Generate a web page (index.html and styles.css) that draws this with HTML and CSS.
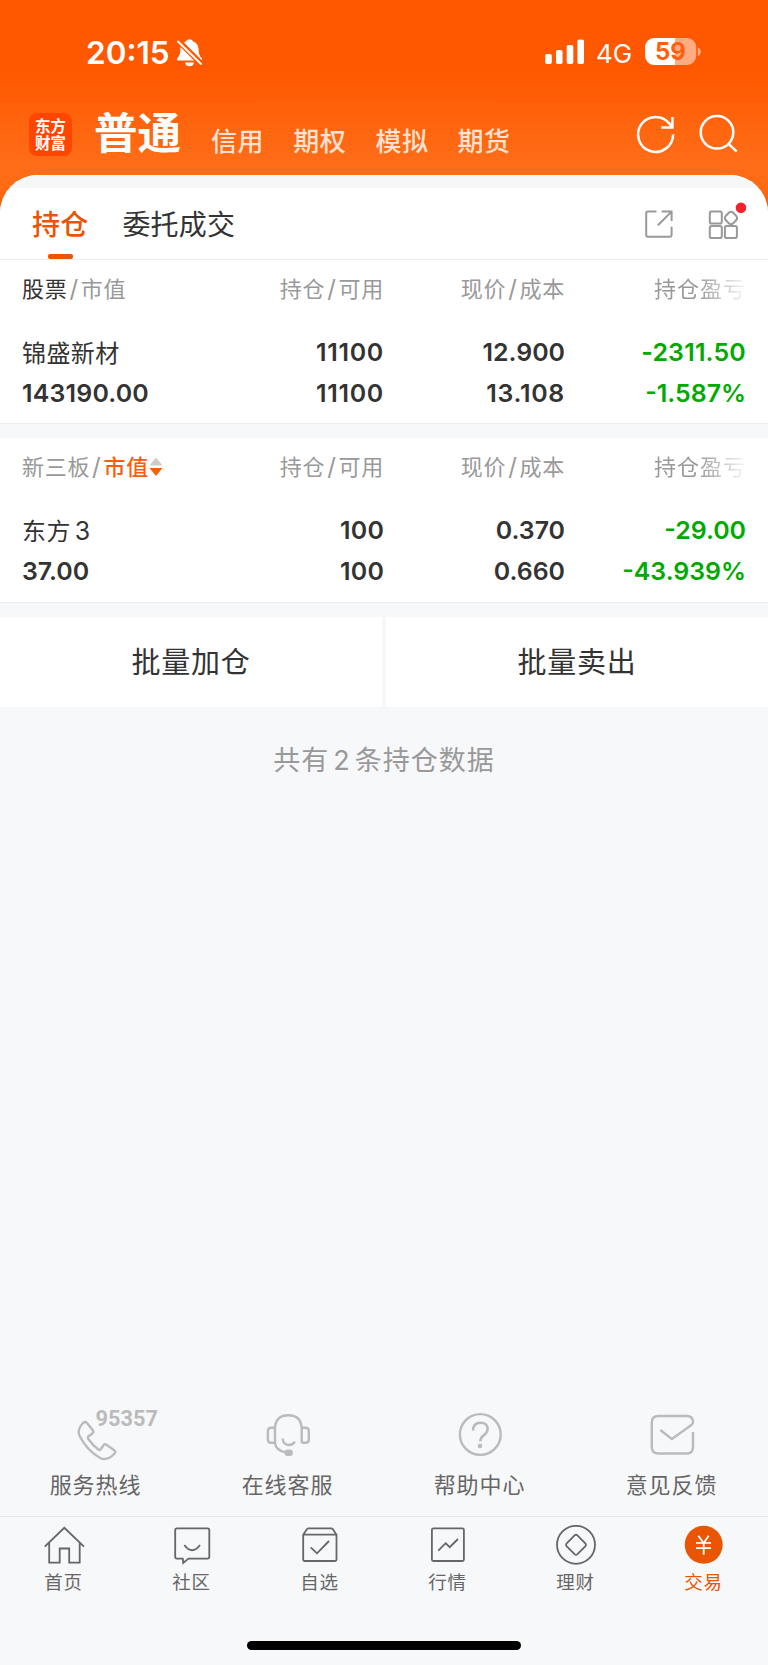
FILE: index.html
```html
<!DOCTYPE html>
<html lang="zh-CN">
<head>
<meta charset="utf-8">
<title>持仓</title>
<link rel="stylesheet" href="styles.css">
</head>
<body>
<div class="app">
  <header class="top">
    <div class="status">
      <span class="clock">20:15</span>
      <svg class="bell" width="27" height="30" viewBox="176 38 27 30">
        <path fill="#fff" d="M189.500 39.200c1.800 0 3.200 1 3.700 2.300 3.600 1.200 5.300 4.400 5.400 8 .1 4.500 1 6.300 3 8.500.8.900.5 2.600-1 2.600h-22.200c-1.500 0-1.800-1.700-1-2.600 2-2.200 2.900-4 3-8.500.1-3.600 1.800-6.800 5.400-8 .5-1.300 1.900-2.300 3.700-2.300zM185.200 62.600h8.600a4.300 3.600 0 0 1-8.600 0z"/>
        <path stroke="#ff5800" stroke-width="5.500" d="M177 39.500l26 26"/>
        <path stroke="#fff" stroke-width="1.900" stroke-linecap="round" d="M178 41.500l23 22.500"/>
      </svg>
      <svg class="signal" width="40" height="26" viewBox="545 39 40 26" fill="#fff">
        <rect x="545.200" y="54" width="6.600" height="10" rx="1.800"/><rect x="556" y="50" width="6.600" height="14" rx="1.800"/><rect x="566.700" y="45" width="6.600" height="19" rx="1.800"/><rect x="577.400" y="39.500" width="6.600" height="24.500" rx="1.800"/>
      </svg>
      <span class="net">4G</span>
      <svg class="battery" width="58" height="28" viewBox="645 38 58 28">
        <clipPath id="cell"><rect x="645.200" y="38" width="51" height="27" rx="9"/></clipPath>
        <g clip-path="url(#cell)"><path fill="#ffac82" d="M645 38h52v27h-52z"/><path fill="#fff" d="M645 38h30v27h-30z"/></g>
        <path fill="#ffac82" d="M697.800 47.500c4 1.200 4 7.300 0 8.500z"/>
        <text class="charge" x="670.500" y="60" text-anchor="middle">59</text>
      </svg>
    </div>
    <div class="accounts">
      <div class="logo"><span>东方</span><span>财富</span></div>
      <b class="current">普通</b>
      <span class="acct">信用</span><span class="acct">期权</span><span class="acct">模拟</span><span class="acct">期货</span>
      <svg class="tools" width="112" height="48" viewBox="632 110 112 48" fill="none" stroke="#fff" stroke-width="2.500">
        <path d="M673.100 134.500A17.500 17.500 0 1 1 669.800 124.200M672.400 117v10.500h-11M672 127l-3-4"/>
        <circle cx="717" cy="132.300" r="16.300"/><path d="M728 143.300l8.700 8.400"/>
      </svg>
    </div>
  </header>
  <main class="sheet">
    <div class="tabs">
      <span class="tab on">持仓</span><span class="tab">委托成交</span>
      <svg class="tab-tools" width="116" height="44" viewBox="636 198 116 44" fill="none" stroke="#999" stroke-width="2">
        <path d="M656.500 211.600H648a1.800 1.800 0 0 0-1.800 1.800V235a1.800 1.800 0 0 0 1.800 1.800h21.800a1.800 1.800 0 0 0 1.800-1.800v-8.300M661.700 211.600h9.900v9.300M671.300 211.900L657.900 225.300"/>
        <rect x="709.800" y="211.600" width="12" height="12" rx="1.800"/><rect x="709.800" y="226" width="12" height="12" rx="1.800"/><rect x="724.900" y="226" width="12" height="12" rx="1.800"/>
        <path d="M729 212.600q2-1.600 4 0l3.300 3.400q1.500 2 0 4l-3.300 3.400q-2 1.600-4 0l-3.300-3.400q-1.500-2 0-4z"/>
        <circle cx="741" cy="207.800" r="5.300" fill="#f5222d" stroke="none"/>
      </svg>
    </div>
    <section class="holding">
      <div class="cols"><span><em>股票</em><i>/</i>市值</span><span>持仓<i>/</i>可用</span><span>现价<i>/</i>成本</span><span class="fade">持仓盈亏</span></div>
      <div class="row name"><span class="stock">锦盛新材</span><span class="wide">11100</span><span>12.900</span><span class="down loose">-2311.50</span></div>
      <div class="row"><span class="loose">143190.00</span><span class="wide">11100</span><span class="wide">13.108</span><span class="down">-1.587%</span></div>
    </section>
    <section class="holding second">
      <div class="cols"><span>新三板<i>/</i><strong>市值</strong><svg class="sort" width="14" height="20" viewBox="0 0 14 20"><path fill="#ccc" d="M7 .500L13.500 8.500H.500z"/><path fill="#ff5c0a" d="M.500 11h13L7 19z"/></svg></span><span>持仓<i>/</i>可用</span><span>现价<i>/</i>成本</span><span class="fade">持仓盈亏</span></div>
      <div class="row name"><span class="stock">东方<u>3</u></span><span class="loose">100</span><span>0.370</span><span class="down">-29.00</span></div>
      <div class="row"><span>37.00</span><span class="loose">100</span><span>0.660</span><span class="down">-43.939%</span></div>
    </section>
    <div class="batch"><div>批量加仓</div><div>批量卖出</div></div>
    <p class="total">共有<u>2</u>条持仓数据</p>
  </main>
  <div class="support">
    <div><svg width="192" height="64" viewBox="0 1404 192 64" fill="none" stroke="#bbb" stroke-width="2.400" stroke-linejoin="round">
      <path d="M83 1423q2-2 4 0l5.600 7q1.500 2-.3 3.500l-4 3q-1 1 0 2.500 4.500 6.500 10 10.500 1.300 1 2.200 0l3-4.300q1.300-1.600 3.300-.2l7.500 5.300q1.800 1.500.3 3.200-7.500 8-14.500 4.500-13-7.500-20.500-22-3-6 3.400-13z"/>
      <text class="hotline" x="95.500" y="1426" textLength="62.500" lengthAdjust="spacingAndGlyphs">95357</text></svg><span>服务热线</span></div>
    <div><svg width="192" height="64" viewBox="192 1404 192 64" fill="none" stroke="#bbb" stroke-width="2.400">
      <path d="M275 1443v-13.500q0-14.300 13.300-14.300t13.400 14.300v13.300M275 1427.700h-3.800q-3.300 0-3.300 3.300v8.500q0 3.300 3.300 3.300h3.800q.5 7.500 11.500 9.900M301.700 1427.700h3.800q3.300 0 3.300 3.300v8.500q0 3.300-3.300 3.300h-3.800M282.600 1438.500q.6 6.400 6.300 6.500 4 0 6-3.300"/>
      <rect x="284.500" y="1449.500" width="8.400" height="6.400" rx="3" fill="#bbb" stroke="none"/></svg><span>在线客服</span></div>
    <div><svg width="192" height="64" viewBox="384 1404 192 64" fill="none" stroke="#bbb" stroke-width="2.400">
      <circle cx="480.300" cy="1434.500" r="20.400"/><path stroke-width="2.600" d="M473.100 1430.500q0-7.800 7.500-7.800 7 0 7 6.400 0 3.400-3.700 6-3.500 2.600-3.500 6.200"/><circle cx="480" cy="1446" r="2.300" fill="#bbb" stroke="none"/></svg><span>帮助中心</span></div>
    <div><svg width="192" height="64" viewBox="576 1404 192 64" fill="none" stroke="#bbb" stroke-width="2.400">
      <path d="M660.300 1430l11.600 9 19.500-14q1.600-1 1.600-2.800 0-6.200-6.500-6.200h-28q-6.700 0-6.700 6.500v24.500q0 6.500 6.700 6.500h28q6.500 0 6.500-6.500v-15"/></svg><span>意见反馈</span></div>
  </div>
  <nav class="nav">
    <div><svg width="128" height="44" viewBox="0 1523 128 44"><path d="M44.700 1546.700l19.600-18.900 19.700 18.900M49.200 1543v19.700h10.500v-14.200h9.500v14.200h10.500V1543"/></svg><span>首页</span></div>
    <div><svg width="128" height="44" viewBox="128 1523 128 44"><path d="M177 1528.400h30.500q1.800 0 1.800 1.800v26.600q0 1.800-1.800 1.800h-19l-5.300 4.300-.4-4.300H177q-1.800 0-1.800-1.800v-26.600q0-1.800 1.800-1.800zM184.300 1545q7.800 10.500 15.700 0"/></svg><span>社区</span></div>
    <div><svg width="128" height="44" viewBox="256 1523 128 44"><path d="M303.200 1534.700l3.900-5.700q.5-.7 1.500-.7h22.600q1 0 1.500.7l3.800 5.700v24.500q0 1.800-1.800 1.800h-29.700q-1.800 0-1.800-1.800zM303.200 1534.700h33.300M310.700 1547.300l6.300 6 12-12.300"/></svg><span>自选</span></div>
    <div><svg width="128" height="44" viewBox="384 1523 128 44"><rect x="431.900" y="1528.400" width="32" height="32.600" rx="1.500"/><path d="M438.300 1550.700l7.400-7.500 4 4 8.300-8.200"/></svg><span>行情</span></div>
    <div><svg width="128" height="44" viewBox="512 1523 128 44"><circle cx="576" cy="1544.800" r="19"/><path d="M574.800 1535.200q1.200-1 2.400 0l8.300 8.300q1 1.300 0 2.600l-8.300 8.300q-1.200 1-2.400 0l-8.300-8.300q-1-1.300 0-2.600z"/></svg><span>理财</span></div>
    <div class="active"><svg width="128" height="44" viewBox="640 1523 128 44"><circle class="coin" cx="703.700" cy="1544.800" r="19"/><path class="yen" d="M698.300 1535.700l5.400 7.300 5-7.300M703.700 1542.800v12M696 1542.900h15M696 1548.200h15"/></svg><span>交易</span></div>
  </nav>
  <div class="home"></div>
</div>
</body>
</html>
```
FILE: styles.css
```css
* { box-sizing: border-box; }
body { margin: 0; background: #f7f8fa; font-family: Inter, "Noto Sans CJK SC", sans-serif; color: #333; }
em, i, u { font-style: normal; text-decoration: none; }
svg { display: block; flex: none; }
.app { display: flex; flex-direction: column; width: 768px; height: 1665px; }

.top { height: 215px; background: linear-gradient(#ff5800 0, #ff5800 68px, #ff6d18 165px, #ff6a14 190px, #f65400 215px); color: #fff; }
.status { display: flex; height: 105px; padding: 37px 0 0 86px; align-items: flex-start; }
.clock { width: 90px; font-size: 31.500px; font-weight: 600; line-height: 31px; }
.bell { margin-top: 1px; }
.signal { margin: 2px 0 0 342px; }
.net { width: 48px; margin-left: 11px; font-size: 26px; line-height: 34px; }
.battery { margin: 1px 0 0 1px; }
.charge { font: 700 24px Inter, sans-serif; fill: #ff600f; }
.accounts { display: flex; height: 70px; padding: 0 24px 0 29px; }
.logo { display: flex; flex-direction: column; width: 43px; height: 43px; margin: 8px 22px 0 0; padding: 4px 0 0 6px; border-radius: 8px; background: #ff4600; font: 700 15.500px/17px "Noto Sans CJK SC", sans-serif; }
.current { width: 117px; font-size: 43.500px; line-height: 57px; font-weight: 700; }
.acct { width: 82.200px; padding-top: 18px; font-size: 26px; line-height: 37px; font-weight: 500; letter-spacing: .5px; color: #ffe2d2; }
.tools { margin: 5px 0 0 auto; }

.sheet { height: 1191px; margin-top: -40px; border-radius: 38px 38px 0 0; overflow: hidden; background: #f7f8fa; }
.tabs { display: flex; height: 85px; border-top: 13px solid #f6f7f9; border-bottom: 1px solid #eee; background: #fff; padding: 0 16px 0 32px; font-size: 28px; line-height: 74px; }
.tab { height: 71px; margin-right: 34px; letter-spacing: .2px; }
.tab.on { position: relative; color: #ea5504; font-weight: 500; }
.tab.on::after { content: ""; position: absolute; left: 16px; bottom: 0; width: 25px; height: 5px; border-radius: 2px; background: #ea5504; }
.tab-tools { margin: 10px 0 0 auto; }
.holding { height: 164px; padding: 8px 22px 0; background: #fff; border-bottom: 1px solid #eee; }
.second { height: 165px; margin-top: 14px; }
.cols, .row { display: grid; grid-template-columns: 178px 184px 181px 181px; text-align: right; }
.cols > :first-child, .row > :first-child { text-align: left; }
.cols { height: 64px; font-size: 22px; line-height: 42px; letter-spacing: .7px; color: #999; white-space: nowrap; }
.cols em { color: #333; }
.cols i { margin: 0 2px; font-size: 24px; }
.cols strong { font-weight: 500; color: #ff5c0a; }
.sort { display: inline-block; vertical-align: -2px; }
.fade { letter-spacing: 1px; -webkit-mask-image: linear-gradient(90deg, #000 132px, transparent 185px); mask-image: linear-gradient(90deg, #000 132px, transparent 185px); }
.row { height: 40.500px; font-size: 24.900px; line-height: 41px; font-weight: 600; }
.wide { letter-spacing: .7px; }
.loose { letter-spacing: .2px; }
.stock { font-size: 24px; font-weight: 400; letter-spacing: .4px; line-height: 43px; }
.stock u { margin-left: 4px; font-size: 25px; }
.down { color: #0a0; }
.batch { display: grid; grid-template-columns: 1fr 1fr; gap: 4px; margin-top: 14px; height: 90px; font-size: 29px; line-height: 92px; letter-spacing: .8px; text-align: center; }
.batch div { height: 90px; background: #fff; }
.total { margin: 0; padding-top: 32px; text-align: center; color: #999; font-size: 27px; line-height: 44px; letter-spacing: 1px; }
.total u { margin: 0 4px; }

.support { display: grid; grid-template-columns: repeat(4, 192px); height: 151px; padding-top: 38px; border-bottom: 1px solid #e6e8ea; color: #666; font-size: 22px; line-height: 34px; letter-spacing: .9px; text-align: center; }
.support span { display: block; padding-right: 1px; }
.hotline { font: 700 22px Roboto, sans-serif; fill: #bbb; stroke: none; letter-spacing: 0; }
.nav { display: grid; grid-template-columns: repeat(6, 128px); height: 124px; padding-top: 6px; color: #666; font-size: 18.500px; line-height: 30px; letter-spacing: .8px; text-align: center; }
.nav span { display: block; padding-right: 1px; }
.nav svg { fill: none; stroke: #666; stroke-width: 1.800; }
.nav .active { color: #ea5504; }
.nav .coin { fill: #ea5504; stroke: none; }
.nav .yen { stroke: #fff; }
.home { width: 274px; height: 9px; margin-left: 247px; border-radius: 5px; background: #000; }
```
